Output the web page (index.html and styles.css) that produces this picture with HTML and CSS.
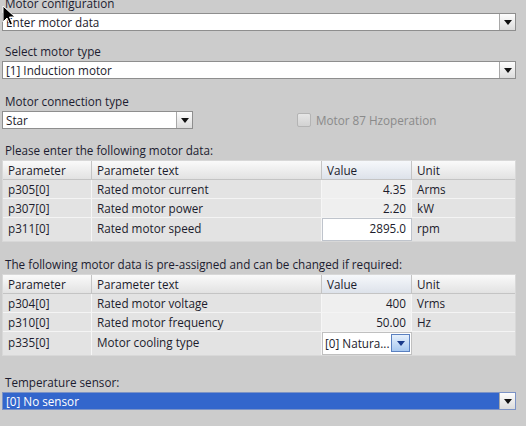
FILE: index.html
```html
<!DOCTYPE html>
<html>
<head>
<meta charset="utf-8">
<link rel="stylesheet" href="styles.css">
</head>
<body>
<div class="page">
  <div class="label first">Motor configuration</div>
  <div class="combo">
    <div class="combo-text">Enter motor data</div>
    <div class="combo-btn"><span class="tri"></span></div>
  </div>

  <div class="label">Select motor type</div>
  <div class="combo">
    <div class="combo-text">[1] Induction motor</div>
    <div class="combo-btn"><span class="tri"></span></div>
  </div>

  <div class="label gap12">Motor connection type</div>
  <div class="conn-row">
    <div class="combo small">
      <div class="combo-text">Star</div>
      <div class="combo-btn"><span class="tri"></span></div>
    </div>
    <div class="check">
      <span class="box"></span>
      <span class="check-label">Motor 87 Hzoperation</span>
    </div>
  </div>

  <div class="label gap11">Please enter the following motor data:</div>
  <div class="table">
    <div class="row head">
      <div class="c c1">Parameter</div>
      <div class="c c2">Parameter text</div>
      <div class="c c3 hv">Value</div>
      <div class="c c4">Unit</div>
    </div>
    <div class="row">
      <div class="c c1">p305[0]</div>
      <div class="c c2">Rated motor current</div>
      <div class="c c3 val">4.35</div>
      <div class="c c4">Arms</div>
    </div>
    <div class="row">
      <div class="c c1">p307[0]</div>
      <div class="c c2">Rated motor power</div>
      <div class="c c3 val">2.20</div>
      <div class="c c4">kW</div>
    </div>
    <div class="row last">
      <div class="c c1">p311[0]</div>
      <div class="c c2">Rated motor speed</div>
      <div class="c c3 val edit">2895.0</div>
      <div class="c c4">rpm</div>
    </div>
  </div>

  <div class="label gap12">The following motor data is pre-assigned and can be changed if required:</div>
  <div class="table">
    <div class="row head">
      <div class="c c1">Parameter</div>
      <div class="c c2">Parameter text</div>
      <div class="c c3 hv">Value</div>
      <div class="c c4">Unit</div>
    </div>
    <div class="row">
      <div class="c c1">p304[0]</div>
      <div class="c c2">Rated motor voltage</div>
      <div class="c c3 val">400</div>
      <div class="c c4">Vrms</div>
    </div>
    <div class="row">
      <div class="c c1">p310[0]</div>
      <div class="c c2">Rated motor frequency</div>
      <div class="c c3 val">50.00</div>
      <div class="c c4">Hz</div>
    </div>
    <div class="row last">
      <div class="c c1">p335[0]</div>
      <div class="c c2">Motor cooling type</div>
      <div class="c c3 dd">
        <div class="dd-box">
          <span class="dd-text">[0] Natura...</span>
          <span class="dd-btn"><span class="tri blue"></span></span>
        </div>
      </div>
      <div class="c c4"></div>
    </div>
  </div>

  <div class="label gap16">Temperature sensor:</div>
  <div class="combo selected">
    <div class="combo-text">[0] No sensor</div>
    <div class="combo-btn"><span class="tri"></span></div>
  </div>
</div>
<svg class="cursor" width="14" height="22" viewBox="0 0 14 22">
  <path d="M1 1 L1 17 L5 13 L8 20 L10.5 19 L7.5 12 L13 12 Z" fill="#000" stroke="#fff" stroke-width="1"/>
</svg>
</body>
</html>
```

FILE: styles.css
```css
html, body {
  margin: 0;
  padding: 0;
  background: #cccccc;
  width: 526px;
  height: 426px;
  overflow: hidden;
}
body {
  font-family: "Open Sans", "Noto Sans", sans-serif;
  font-size: 11.7px;
  color: #1c1c2c;
  position: relative;
}
.page {
  display: flex;
  flex-direction: column;
  padding: 0 10px 0 2px;
}
.label {
  height: 20px;
  line-height: 20px;
  padding-left: 3px;
  margin-top: 10px;
  white-space: nowrap;
  color: #1c1c30;
}
.label.first {
  margin-top: -6px;
  height: 19px;
  line-height: 19px;
}
.label.gap11 { margin-top: 11px; }
.label.gap12 { margin-top: 12px; }
.label.gap16 { margin-top: 16px; }
.combo {
  display: flex;
  height: 16px;
  border: 1px solid #8e8e8e;
  background: #ffffff;
}
.combo-text {
  flex: 1;
  line-height: 16px;
  padding-left: 3px;
  white-space: nowrap;
  overflow: hidden;
}
.combo-btn {
  width: 15px;
  border-left: 1px solid #a8a8a8;
  background: linear-gradient(#fdfdfd, #dcdcdc);
  display: flex;
  align-items: center;
  justify-content: center;
}
.tri {
  width: 0;
  height: 0;
  border-left: 4px solid transparent;
  border-right: 4px solid transparent;
  border-top: 5px solid #111;
  margin-top: 1px;
}
.tri.blue { border-top-color: #1a3a8a; }
.combo.selected {
  background: #3366cc;
  border-color: #7c93c6;
  color: #ffffff;
}
.conn-row {
  display: flex;
  align-items: center;
}
.combo.small { width: 189px; }
.check {
  display: flex;
  align-items: center;
  margin-left: 104px;
}
.box {
  width: 12px;
  height: 12px;
  border: 1px solid #b4b4b4;
  border-radius: 2px;
  background: linear-gradient(#e6e6e6, #d2d2d2);
}
.check-label {
  margin-left: 5px;
  color: #8a8a8a;
  white-space: nowrap;
}
.table {
  display: flex;
  flex-direction: column;
  border: 1px solid #d8d8d8;
  background: #e3e3e3;
}
.row {
  display: flex;
  height: 18px;
  border-bottom: 1px solid #f4f4f4;
}
.row.last {
  height: 23px;
  border-bottom: none;
}
.row.head {
  height: 18px;
  background: linear-gradient(#fafafa, #e2e2e2);
  border-bottom: 1px solid #c4c4c4;
}
.c {
  line-height: 18px;
  padding-left: 5px;
  white-space: nowrap;
  overflow: hidden;
  border-right: 1px solid #f6f6f6;
  box-sizing: border-box;
}
.row.last .c { line-height: 20px; }
.row.head .c {
  line-height: 18px;
  border-right: 1px solid #c4c4c4;
}
.row.head .hv {
  background: linear-gradient(#f6f8fb, #dde2ea);
}
.c1 { width: 89px; }
.c2 { width: 230px; }
.c3 { width: 90px; }
.c4 { flex: 1; border-right: none; }
.row.head .c4 { border-right: none; }
.val {
  text-align: right;
  padding-right: 5px;
  background: #efefef;
}
.row.last .val.edit {
  background: #ffffff;
  border: 1px solid #bfc4cc;
  line-height: 19px;
}
.dd {
  padding: 0;
  background: #ffffff;
  border: 1px solid #c0c0c0;
}
.dd-box {
  display: flex;
  height: 100%;
}
.dd-text {
  flex: 1;
  padding-left: 2px;
  line-height: 21px;
}
.dd-btn {
  width: 17px;
  margin: 1px 1px 2px 0;
  border: 1px solid #5a80c0;
  background: linear-gradient(#e6f0fc, #a8c8f0);
  display: flex;
  align-items: center;
  justify-content: center;
}
.cursor {
  position: absolute;
  left: 2px;
  top: 5px;
}
```
